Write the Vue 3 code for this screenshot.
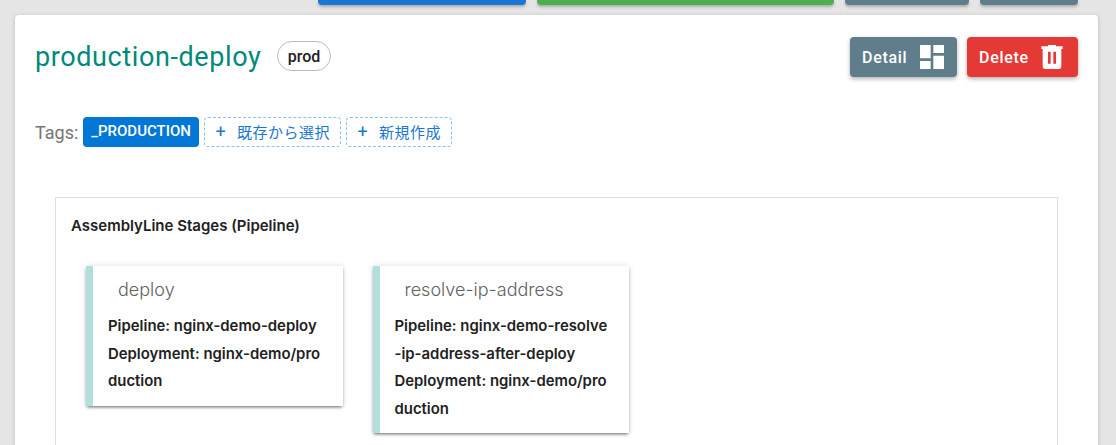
<script setup>
const topButtons = [
  { width: 208, color: '#1976d2' },
  { width: 297, color: '#4caf50' },
  { width: 124, color: '#607d8b' },
  { width: 98, color: '#607d8b' },
];

const stages = [
  {
    name: 'deploy',
    pipeline: 'nginx-demo-deploy',
    deployment: 'nginx-demo/production',
  },
  {
    name: 'resolve-ip-address',
    pipeline: 'nginx-demo-resolve-ip-address-after-deploy',
    deployment: 'nginx-demo/production',
  },
];
</script>

<template>
  <div class="page">
    <div class="top-bar">
      <div
        v-for="(button, index) in topButtons"
        :key="index"
        class="top-button"
        :style="{ width: button.width + 'px', backgroundColor: button.color }"
      ></div>
    </div>

    <section class="card">
      <header class="card-header">
        <div class="title-group">
          <h1 class="title">production-deploy</h1>
          <span class="env-chip">prod</span>
        </div>
        <div class="actions">
          <button class="action detail">
            <span>Detail</span>
            <svg viewBox="0 0 24 24" class="action-icon">
              <path d="M13,3V9H21V3M13,21H21V11H13M3,21H11V15H3M3,13H11V3H3V13Z" />
            </svg>
          </button>
          <button class="action delete">
            <span>Delete</span>
            <svg viewBox="0 0 24 24" class="action-icon">
              <path d="M9,3V4H4V6H5V19A2,2 0 0,0 7,21H17A2,2 0 0,0 19,19V6H20V4H15V3H9M9,8H11V17H9V8M13,8H15V17H13V8Z" />
            </svg>
          </button>
        </div>
      </header>

      <div class="tags">
        <span class="tags-label">Tags:</span>
        <span class="tag">_PRODUCTION</span>
        <span class="tag-add select"><i>+</i>既存から選択</span>
        <span class="tag-add create"><i>+</i>新規作成</span>
      </div>

      <div class="pipeline">
        <h2 class="pipeline-title">AssemblyLine Stages (Pipeline)</h2>
        <div class="stages">
          <article v-for="stage in stages" :key="stage.name" class="stage">
            <h3 class="stage-name">{{ stage.name }}</h3>
            <p class="stage-line">Pipeline: {{ stage.pipeline }}</p>
            <p class="stage-line">Deployment: {{ stage.deployment }}</p>
          </article>
        </div>
      </div>
    </section>
  </div>
</template>

<style>
html,
body {
  margin: 0;
  height: 100%;
  overflow: hidden;
  background: #e5e5e5;
}
</style>

<style scoped>
.page {
  height: 445px;
  overflow: hidden;
  background: #e5e5e5;
  font-family: Roboto, "Noto Sans CJK JP", sans-serif;
}

.top-bar {
  display: flex;
  justify-content: flex-end;
  gap: 11px;
  height: 5px;
  padding-right: 38px;
}

.top-button {
  height: 5px;
  border-radius: 0 0 4px 4px;
  box-shadow: 0 2px 3px rgba(0, 0, 0, 0.25);
}

.card {
  margin: 10px 18px 0 15px;
  height: 500px;
  padding: 22px 20px 0;
  box-sizing: border-box;
  background: #fff;
  border-radius: 4px;
  box-shadow: 0 1px 4px rgba(0, 0, 0, 0.2);
}

.card-header {
  display: flex;
  justify-content: space-between;
  align-items: flex-start;
  height: 80px;
}

.title-group {
  display: flex;
  align-items: center;
  gap: 16px;
  height: 40px;
}

.title {
  margin: 0;
  font-size: 27px;
  font-weight: 400;
  letter-spacing: 0.6px;
  color: #00897b;
}

.env-chip {
  display: flex;
  align-items: center;
  height: 30px;
  margin-top: -2px;
  padding: 0 9.5px;
  box-sizing: border-box;
  border: 1px solid #bdbdbd;
  border-radius: 15px;
  font-size: 16px;
  font-weight: 500;
  color: #212121;
}

.actions {
  display: flex;
  gap: 10px;
}

.action {
  display: flex;
  align-items: center;
  justify-content: space-between;
  height: 40px;
  padding: 0 12px;
  border: 0;
  border-radius: 4px;
  font-family: inherit;
  font-size: 16px;
  font-weight: 500;
  letter-spacing: 0.7px;
  color: #fff;
  box-shadow: 0 2px 4px rgba(0, 0, 0, 0.3);
}

.detail {
  width: 107px;
  background: #607d8b;
}

.delete {
  width: 111px;
  background: #e53935;
}

.action-icon {
  width: 32px;
  height: 32px;
  margin-right: -2px;
  fill: #fff;
}

.detail .action-icon {
  margin-right: -3px;
}

.tags {
  display: flex;
  align-items: center;
  gap: 5px;
  height: 30px;
}

.tags-label {
  font-size: 18px;
  color: #757575;
}

.tag {
  display: flex;
  align-items: center;
  height: 30px;
  padding: 0 8px 2px;
  box-sizing: border-box;
  background: #0277d6;
  border-radius: 4px;
  font-size: 15px;
  font-weight: 500;
  color: #fff;
}

.tag-add {
  display: flex;
  align-items: center;
  height: 30px;
  padding-bottom: 2px;
  box-sizing: border-box;
  border: 1px dashed #90bfee;
  border-radius: 4px;
  font-size: 15px;
  letter-spacing: 0.5px;
  color: #1976d2;
}

.tag-add i {
  width: 32px;
  text-align: center;
  font-style: normal;
  font-size: 18px;
}

.select {
  width: 137px;
}

.create {
  width: 106px;
}

.pipeline {
  margin: 50px 20px 0;
  height: 300px;
  padding: 19px 15px 0;
  box-sizing: border-box;
  border: 1px solid #e0e0e0;
  font-family: Inter, "Noto Sans CJK JP", sans-serif;
}

.pipeline-title {
  margin: 0;
  font-size: 15px;
  line-height: 17px;
  font-weight: 600;
  color: #212121;
}

.stages {
  display: flex;
  align-items: flex-start;
  gap: 30px;
  margin-top: 32px;
  padding-left: 15px;
}

.stage {
  width: 256.5px;
  padding: 12px 18px 10px 15px;
  box-sizing: border-box;
  background: #fff;
  border-left: 7px solid #b2dfdb;
  box-shadow: 0 2px 3px -1px rgba(0, 0, 0, 0.55), 0 0 6px rgba(0, 0, 0, 0.14);
}

.stage-name {
  margin: 0 0 11px 10px;
  font-size: 18px;
  line-height: 24px;
  font-weight: 300;
  color: #616161;
}

.stage-line {
  margin: 0;
  font-size: 14.9px;
  line-height: 27.5px;
  font-weight: 600;
  color: #212121;
  word-break: break-all;
}
</style>
